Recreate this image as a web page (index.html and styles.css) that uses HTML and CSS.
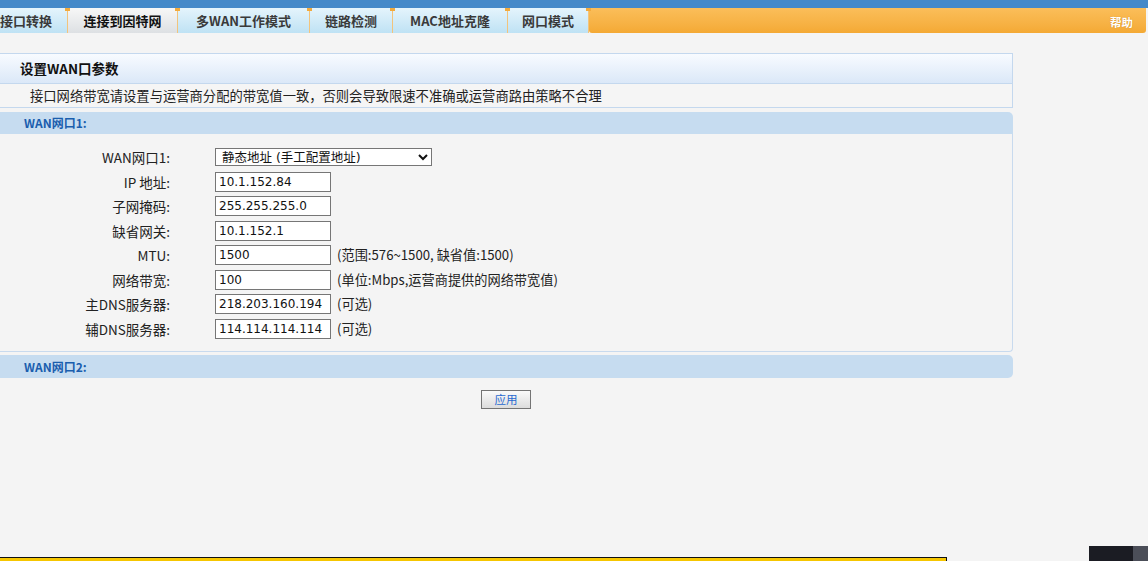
FILE: index.html
```html
<!DOCTYPE html>
<html lang="zh-CN">
<head>
<meta charset="utf-8">
<title>连接到因特网</title>
<link rel="stylesheet" href="styles.css">
</head>
<body>
<div class="topbar"></div>
<div class="tabs">
  <div class="tab t1">接口转换</div>
  <div class="tab t2 active">连接到因特网</div>
  <div class="tab t3">多WAN工作模式</div>
  <div class="tab t4">链路检测</div>
  <div class="tab t5">MAC地址克隆</div>
  <div class="tab t6">网口模式</div>
  <div class="tabfill"><span class="help">帮助</span></div>
</div>
<div class="content">
  <div class="titlebox">
    <div class="title">设置WAN口参数</div>
    <div class="notice">接口网络带宽请设置与运营商分配的带宽值一致，否则会导致限速不准确或运营商路由策略不合理</div>
  </div>
  <div class="sechead first">WAN网口1:</div>
  <div class="panel">
    <div class="form">
      <label class="lbl">WAN网口1:</label>
      <div class="field">
        <select class="sel"><option>静态地址 (手工配置地址)</option></select>
      </div>
      <label class="lbl">IP 地址:</label>
      <div class="field"><input class="inp" type="text" value="10.1.152.84"></div>
      <label class="lbl">子网掩码:</label>
      <div class="field"><input class="inp" type="text" value="255.255.255.0"></div>
      <label class="lbl">缺省网关:</label>
      <div class="field"><input class="inp" type="text" value="10.1.152.1"></div>
      <label class="lbl">MTU:</label>
      <div class="field"><input class="inp" type="text" value="1500"><span class="hint">(范围:576~1500, 缺省值:1500)</span></div>
      <label class="lbl">网络带宽:</label>
      <div class="field"><input class="inp" type="text" value="100"><span class="hint">(单位:Mbps,运营商提供的网络带宽值)</span></div>
      <label class="lbl">主DNS服务器:</label>
      <div class="field"><input class="inp" type="text" value="218.203.160.194"><span class="hint">(可选)</span></div>
      <label class="lbl">辅DNS服务器:</label>
      <div class="field"><input class="inp" type="text" value="114.114.114.114"><span class="hint">(可选)</span></div>
    </div>
  </div>
  <div class="sechead second">WAN网口2:</div>
  <div class="actions"><button class="btn" type="button">应用</button></div>
</div>
<div class="dock-yellow"></div>
<div class="dock-dark"><span class="dock-dark-end"></span></div>
</body>
</html>
```
FILE: styles.css
```css
html, body {
  margin: 0;
  padding: 0;
}
body {
  background: #f4f4f4;
  font-family: "Noto Sans CJK SC", "Liberation Sans", sans-serif;
  font-size: 13.5px;
  color: #222;
  height: 561px;
  overflow: hidden;
}

.topbar {
  height: 8px;
  background: #4489c9;
}

.tabs {
  display: flex;
  height: 25px;
  padding-right: 2px;
}
.tab {
  flex: none;
  display: flex;
  align-items: center;
  justify-content: center;
  box-sizing: border-box;
  height: 25px;
  background: linear-gradient(#e4f4fc, #bfe2f4);
  border-right: 1px solid #f2c47c;
  font-weight: bold;
  font-size: 13px;
  color: #3a3a3a;
  line-height: 25px;
  position: relative;
}
.tab::after {
  content: "";
  position: absolute;
  right: -3px;
  top: 0;
  width: 5px;
  height: 3px;
  background: #f3aa3c;
  z-index: 1;
}
.tab.active {
  background: linear-gradient(#f7f7f7, #dde0e3);
  color: #111;
}
.t1 { width: 68px; justify-content: flex-start; padding-left: 0; }
.t2 { width: 110px; }
.t3 { width: 132px; }
.t4 { width: 83px; }
.t5 { width: 115px; }
.t6 { width: 81px; }
.tabfill {
  flex: 1;
  display: flex;
  align-items: center;
  justify-content: flex-end;
  height: 25px;
  background: linear-gradient(#fbbe5a, #f6b041 70%, #f4a934);
  border-radius: 0 0 3px 3px;
  padding-right: 13px;
}
.help {
  color: #fff;
  font-weight: bold;
  font-size: 11.5px;
  text-shadow: 0 0 1px #c47a10;
  padding-top: 3px;
}

.content {
  width: 1013px;
  padding-top: 20px;
}

.titlebox {
  border: 1px solid #c4d8ee;
  border-left: none;
}
.title {
  height: 29px;
  line-height: 29px;
  padding-left: 20px;
  font-weight: bold;
  font-size: 13.5px;
  color: #111;
  background: linear-gradient(#f8fbff, #dbe8f8);
  border-bottom: 1px solid #c4d8ee;
}
.notice {
  height: 23px;
  line-height: 23px;
  padding-left: 30px;
  font-size: 13.3px;
  color: #222;
  background: #f5f5f5;
}

.sechead {
  height: 22px;
  line-height: 22px;
  padding-left: 24px;
  background: #c6dcf0;
  color: #1a5eae;
  font-weight: bold;
  font-size: 12px;
}
.sechead.first {
  margin-top: 4px;
  border-radius: 0 5px 0 0;
}
.sechead.second {
  margin-top: 3px;
  height: 23px;
  line-height: 24px;
  border-radius: 0 5px 5px 0;
}

.panel {
  border-right: 1px solid #c8daee;
  border-bottom: 1px solid #c8daee;
  border-radius: 0 0 4px 0;
  padding: 11px 0 10px 0;
}
.form {
  display: grid;
  grid-template-columns: 170px 1fr;
  grid-auto-rows: 24.5px;
  column-gap: 45px;
  align-items: center;
}
.lbl {
  text-align: right;
  font-size: 13.5px;
  line-height: 20px;
  color: #222;
}
.field {
  display: flex;
  align-items: center;
}
.inp {
  box-sizing: border-box;
  width: 116px;
  height: 20px;
  margin: 0;
  padding: 0 0 0 3px;
  border: 1px solid #767676;
  border-radius: 0;
  background: #fff;
  font-family: "DejaVu Sans", sans-serif;
  font-size: 12px;
  color: #111;
  outline: none;
}
.sel {
  box-sizing: border-box;
  width: 217px;
  height: 18px;
  margin: 0;
  padding: 0 0 0 2px;
  border: 1px solid #767676;
  border-radius: 0;
  background-color: #fff;
  font-family: "DejaVu Sans", "Noto Sans CJK SC", sans-serif;
  font-size: 12.5px;
  color: #111;
  line-height: 14px;
}
.hint {
  margin-left: 6px;
  font-size: 13.2px;
  line-height: 20px;
  color: #222;
  white-space: nowrap;
}

.actions {
  padding: 10px 0 0 481px;
}
.btn {
  box-sizing: border-box;
  width: 50px;
  height: 19px;
  margin: 0;
  padding: 0;
  border: 1px solid #747474;
  border-radius: 0;
  background: linear-gradient(#fafafa, #dcdcdc);
  color: #2a6ad0;
  font-family: "Noto Sans CJK SC", sans-serif;
  font-size: 11.5px;
  line-height: 17px;
}

.dock-yellow {
  position: fixed;
  left: 0;
  bottom: 0;
  width: 946px;
  height: 3px;
  background: #f6c600;
  border-top: 1px solid #111;
  border-right: 1px solid #111;
}
.dock-dark {
  position: fixed;
  right: 0;
  bottom: 0;
  width: 59px;
  height: 15px;
  background: #1b1c23;
  display: flex;
  justify-content: flex-end;
}
.dock-dark-end {
  width: 15px;
  height: 15px;
  background: #4b4e58;
}
```
